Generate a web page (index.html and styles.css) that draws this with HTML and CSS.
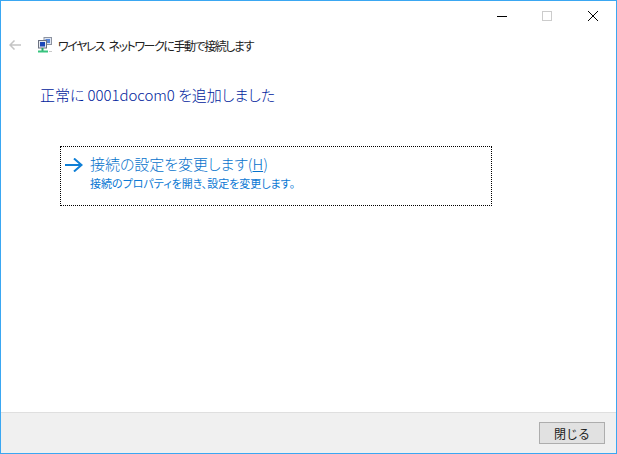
FILE: index.html
```html
<!DOCTYPE html>
<html lang="ja">

<head>
  <meta charset="UTF-8">
  <title>ワイヤレス ネットワークに手動で接続します</title>
  <link rel="stylesheet" href="styles.css">
</head>

<body>
  <div class="window">
    <div class="titlebar">
      <span class="win-btn win-min">
        <svg width="10" height="10" viewBox="0 0 10 10"><path d="M0 5.500H10" stroke="#000" fill="none"/></svg>
      </span>
      <span class="win-btn">
        <svg width="10" height="10" viewBox="0 0 10 10"><rect x="0.500" y="0.500" width="9" height="9" stroke="#ccc" fill="none"/></svg>
      </span>
      <span class="win-btn">
        <svg width="10" height="10" viewBox="0 0 10 10"><path d="M0 0L10 10M10 0L0 10" stroke="#000" fill="none"/></svg>
      </span>
    </div>

    <div class="header">
      <svg class="back" width="12" height="10" viewBox="0 0 12 10"><path d="M12 5H1M5.500 0.500L1 5L5.500 9.500" stroke="#c4c4c4" stroke-width="1.500" fill="none"/></svg>
      <svg class="net-icon" width="16" height="16" viewBox="0 0 16 16">
        <rect x="7" y="0.500" width="7.500" height="7" fill="#dfe6f2" stroke="#8d93a0"/>
        <rect x="8.500" y="2" width="4.500" height="4" fill="#5b86d6"/>
        <rect x="1.500" y="3.500" width="8" height="7.500" fill="#e6eaf2" stroke="#6c7280"/>
        <rect x="3" y="5" width="5" height="4.500" fill="#1c46b8"/>
        <path d="M5.500 11V14" stroke="#2aa56a" stroke-width="2" fill="none"/>
        <path d="M1 14.500H11" stroke="#37c47e" stroke-width="2" fill="none"/>
        <path d="M12 14.500H15" stroke="#c9c9c9" fill="none"/>
      </svg>
      <span class="header-title">ワイヤレス ネットワークに手動で接続します</span>
    </div>

    <div class="content">
      <h1>正常に 0001docom0 を追加しました</h1>
      <a class="command-link" href="#">
        <svg class="arrow" width="18" height="14" viewBox="0 0 18 14"><path d="M0 7H16M9 0.500L16.500 7L9 13.500" stroke="#0f7fd6" stroke-width="2" fill="none"/></svg>
        <span class="command-text">
          <span class="command-main">接続の設定を変更します(<u>H</u>)</span>
          <span class="command-sub">接続のプロパティを開き、設定を変更します。</span>
        </span>
      </a>
    </div>

    <div class="footer">
      <button class="close-btn">閉じる</button>
    </div>
  </div>
</body>

</html>
```

FILE: styles.css
```css
* {
  box-sizing: border-box;
  margin: 0;
  padding: 0;
}

html,
body {
  height: 100%;
  overflow: hidden;
}

body {
  font-family: "Noto Sans CJK JP", "Noto Sans", sans-serif;
  font-feature-settings: "palt";
  background: #fff;
}

.window {
  height: 100%;
  display: flex;
  flex-direction: column;
  border: 1px solid #3aa7f2;
  background: #fff;
}

.titlebar {
  display: flex;
  justify-content: flex-end;
  height: 29px;
}

.win-btn {
  width: 46px;
  display: flex;
  align-items: center;
  justify-content: center;
}

.win-min {
  padding-left: 2px;
}

.header {
  display: flex;
  align-items: center;
  height: 30px;
  padding-left: 8px;
}

.back {
  margin-right: 16px;
}

.net-icon {
  margin-right: 5px;
}

.header-title {
  font-size: 12px;
  letter-spacing: -1.45px;
  word-spacing: 3px;
  color: #222;
}

.content {
  flex: 1;
  padding: 23px 0 0 39px;
}

.content h1 {
  font-size: 15px;
  font-weight: 300;
  line-height: 24px;
  letter-spacing: -0.05px;
  color: #00229c;
}

.command-link {
  display: flex;
  width: 432px;
  height: 60px;
  margin: 39px 0 0 20px;
  padding: 6px 0 0 4px;
  border: 1px dotted #000;
  text-decoration: none;
  color: #0a78d4;
}

.arrow {
  margin: 5px 7px 0 0;
}

.command-text {
  display: flex;
  flex-direction: column;
}

.command-main {
  font-size: 15px;
  font-weight: 300;
  line-height: 22px;
  letter-spacing: -0.05px;
  color: #0672cc;
}

.command-sub {
  font-size: 11px;
  line-height: 16px;
}

.footer {
  display: flex;
  justify-content: flex-end;
  align-items: flex-start;
  height: 41px;
  padding: 9px 11px 0 0;
  background: #f0f0f0;
  border-top: 1px solid #dfdfdf;
}

.close-btn {
  width: 66px;
  height: 22px;
  font-family: inherit;
  font-size: 12px;
  color: #222;
  background: #e1e1e1;
  border: 1px solid #adadad;
}
```
